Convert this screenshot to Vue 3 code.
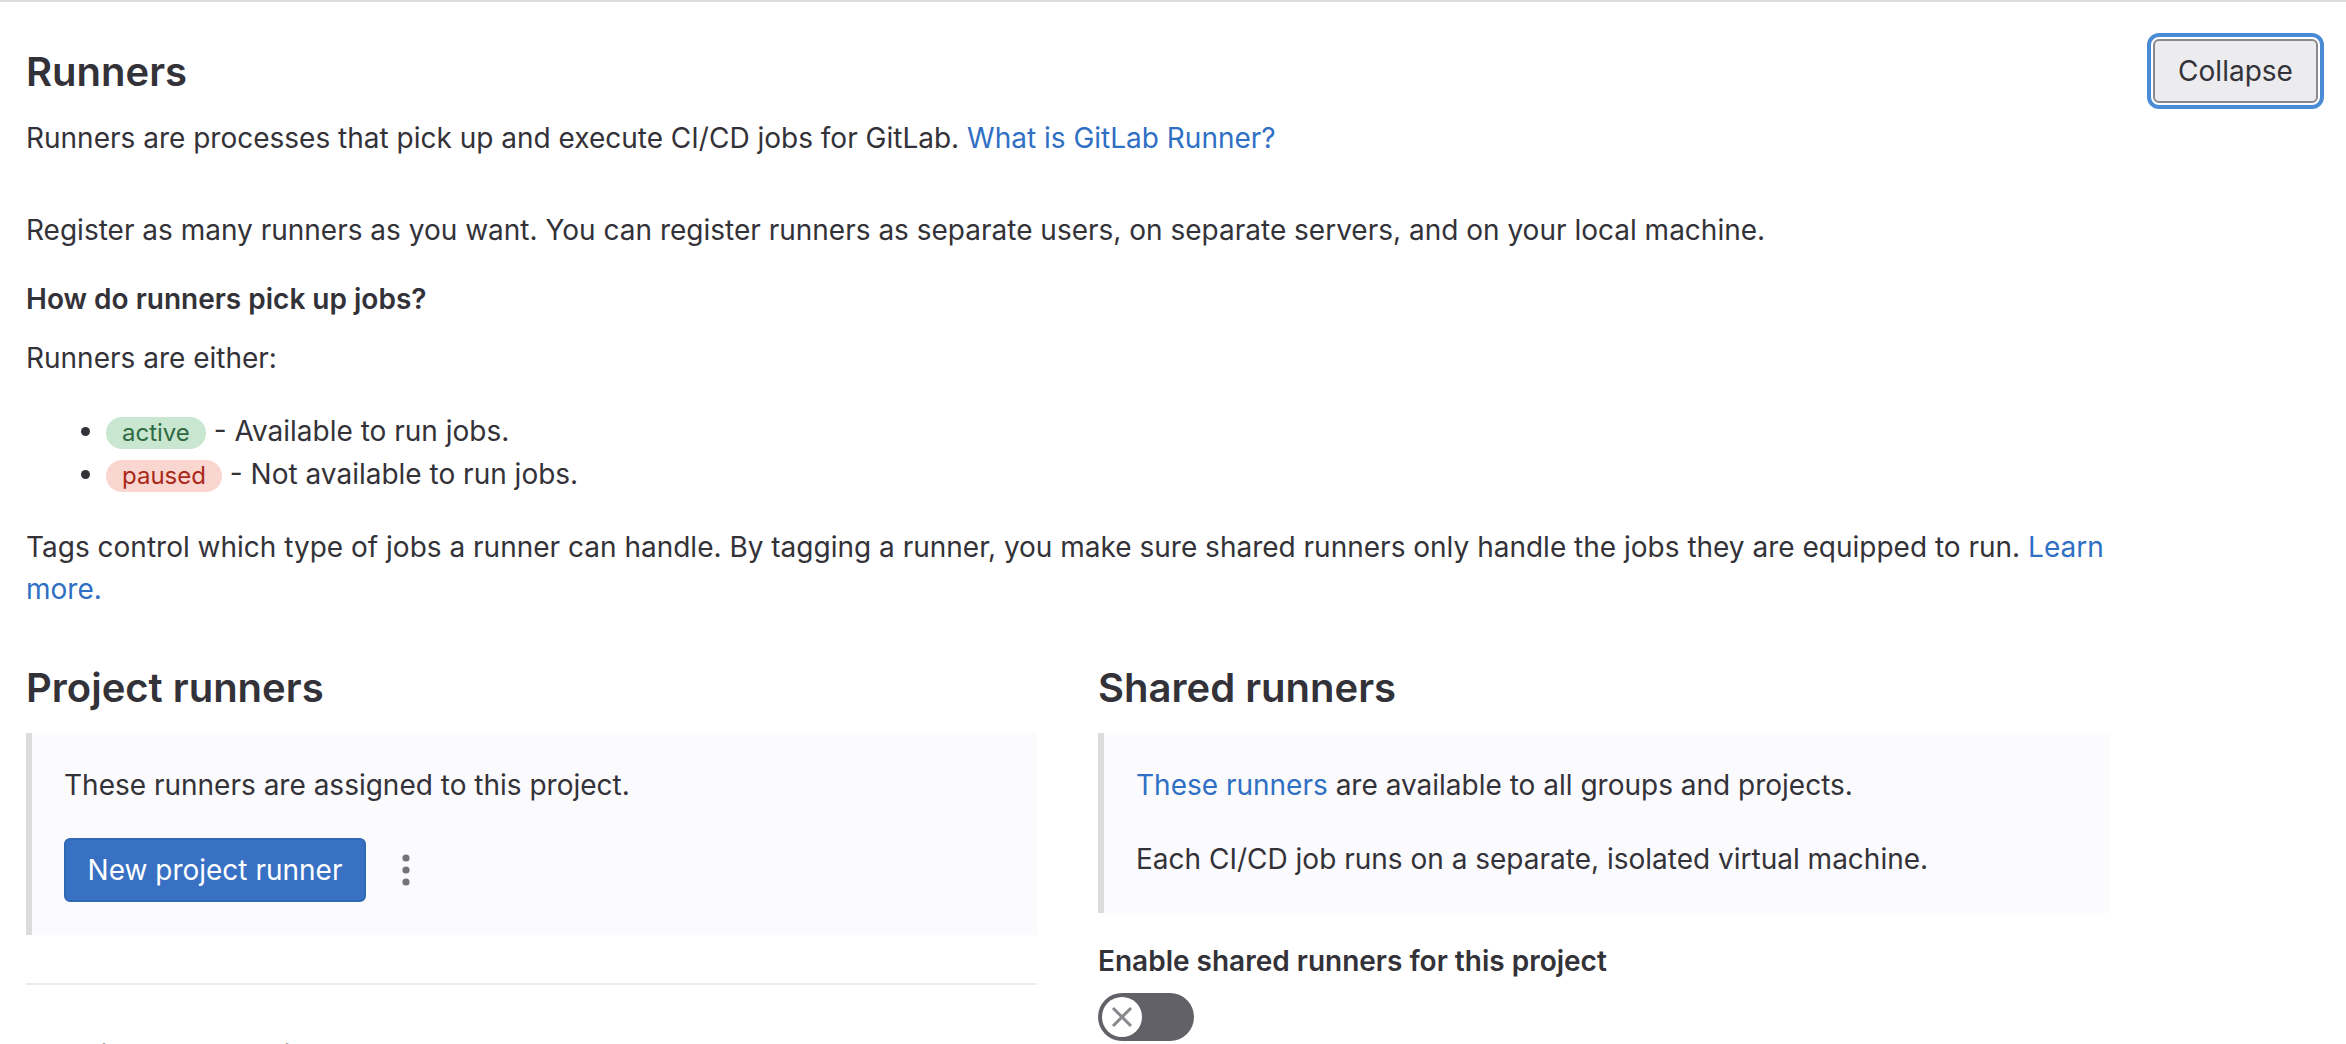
<template>
  <section class="settings-page">
    <header class="section-head">
      <div class="section-intro">
        <h1>Runners</h1>
        <p class="lead">
          Runners are processes that pick up and execute CI/CD jobs for GitLab.
          <a href="#">What is GitLab Runner?</a>
        </p>
      </div>
      <button class="collapse-btn" type="button">Collapse</button>
    </header>

    <div class="section-body">
      <p class="register">
        Register as many runners as you want. You can register runners as separate users, on separate servers, and on your local machine.
      </p>
      <p class="how"><strong>How do runners pick up jobs?</strong></p>
      <p class="either">Runners are either:</p>
      <ul class="states">
        <li v-for="s in states" :key="s.name">
          <span class="badge" :class="'badge--' + s.name">{{ s.name }}</span> - {{ s.text }}
        </li>
      </ul>
      <p class="tags">
        Tags control which type of jobs a runner can handle. By tagging a runner, you make sure shared runners only handle the jobs they are equipped to run.
        <a href="#">Learn more.</a>
      </p>

      <div class="columns">
        <div class="col">
          <h2>Project runners</h2>
          <div class="callout callout--project">
            <p>These runners are assigned to this project.</p>
            <div class="actions">
              <button class="primary-btn" type="button">New project runner</button>
              <button class="kebab" type="button" aria-label="More actions">
                <svg width="12" height="36" viewBox="0 0 12 36">
                  <circle cx="6" cy="6" r="3.6" />
                  <circle cx="6" cy="18" r="3.6" />
                  <circle cx="6" cy="30" r="3.6" />
                </svg>
              </button>
            </div>
          </div>
          <hr />
          <h2>Assigned project runners</h2>
        </div>

        <div class="col">
          <h2>Shared runners</h2>
          <div class="callout callout--shared">
            <p><a href="#">These runners</a> are available to all groups and projects.</p>
            <p>Each CI/CD job runs on a separate, isolated virtual machine.</p>
          </div>
          <p class="toggle-label"><strong>Enable shared runners for this project</strong></p>
          <div class="toggle">
            <span class="toggle-knob">
              <svg width="24" height="24" viewBox="0 0 24 24">
                <path d="M3 3 L21 21 M21 3 L3 21" />
              </svg>
            </span>
          </div>
        </div>
      </div>
    </div>
  </section>
</template>

<script setup>
const states = [
  { name: 'active', text: 'Available to run jobs.' },
  { name: 'paused', text: 'Not available to run jobs.' }
]
</script>

<style scoped>
.settings-page {
  height: 1044px;
  overflow: hidden;
  box-sizing: border-box;
  border-top: 2px solid #dcdcde;
  padding: 45px 26px 0;
  font-family: Inter, "Liberation Sans", sans-serif;
  font-size: 28px;
  line-height: 42px;
  color: #333238;
  background: #fff;
}

.section-head {
  display: flex;
  justify-content: space-between;
  align-items: flex-start;
}

h1 {
  margin: 0;
  font-size: 40px;
  line-height: 50px;
  font-weight: 600;
}

h2 {
  margin: 0;
  font-size: 40px;
  line-height: 50px;
  font-weight: 600;
}

p {
  margin: 0;
}

strong {
  font-weight: 600;
}

a {
  color: #2f6fc4;
  text-decoration: none;
}

.lead {
  margin-top: 20px;
}

.collapse-btn {
  margin: -8px 2px 0 0;
  width: 165px;
  height: 64px;
  box-sizing: border-box;
  border: 2px solid #89888d;
  border-radius: 6px;
  background: #ececef;
  color: #333238;
  font: inherit;
  outline: 4px solid #4a8bd6;
  outline-offset: 2px;
}

.register {
  margin-top: 50px;
}

.how {
  margin-top: 27px;
}

.either {
  margin-top: 17px;
}

.states {
  margin: 31px 0 0;
  padding: 0 0 0 80px;
}

.states li {
  height: 43px;
}

.badge {
  display: inline-block;
  height: 32px;
  line-height: 32px;
  padding: 0 16px;
  border-radius: 16px;
  font-size: 24px;
}

.badge--active {
  background: #c8e6d0;
  color: #2f6b42;
}

.badge--paused {
  background: #f9d6cf;
  color: #a9281a;
}

.tags {
  margin-top: 30px;
  max-width: 2084px;
}

.columns {
  margin-top: 53px;
  width: 2084px;
  display: grid;
  grid-template-columns: 1011px 1012px;
  column-gap: 61px;
}

.callout {
  margin-top: 20px;
  box-sizing: border-box;
  border-left: 6px solid #dcdcde;
  background: #fbfafd;
  padding: 31px 32px 0;
}

.callout--project {
  height: 202px;
}

.callout--shared {
  height: 180px;
}

.callout--shared p + p {
  margin-top: 32px;
}

.actions {
  display: flex;
  align-items: center;
  margin-top: 32px;
}

.primary-btn {
  width: 302px;
  height: 64px;
  border: 2px solid #2f68b4;
  border-radius: 6px;
  background: #3871c4;
  color: #fff;
  font: inherit;
}

.kebab {
  margin-left: 34px;
  padding: 0;
  border: 0;
  background: none;
  line-height: 0;
  fill: #737278;
}

hr {
  margin: 48px 0 50px;
  border: 0;
  border-top: 2px solid #ececef;
}

.toggle-label {
  margin-top: 27px;
}

.toggle {
  margin-top: 11px;
  width: 96px;
  height: 48px;
  border-radius: 24px;
  background: #626168;
  padding: 4px;
  box-sizing: border-box;
}

.toggle-knob {
  display: flex;
  align-items: center;
  justify-content: center;
  width: 40px;
  height: 40px;
  border-radius: 50%;
  background: #fff;
}

.toggle-knob path {
  stroke: #89888d;
  stroke-width: 3;
  fill: none;
}
</style>

<style>
body {
  overflow: hidden;
}
</style>
